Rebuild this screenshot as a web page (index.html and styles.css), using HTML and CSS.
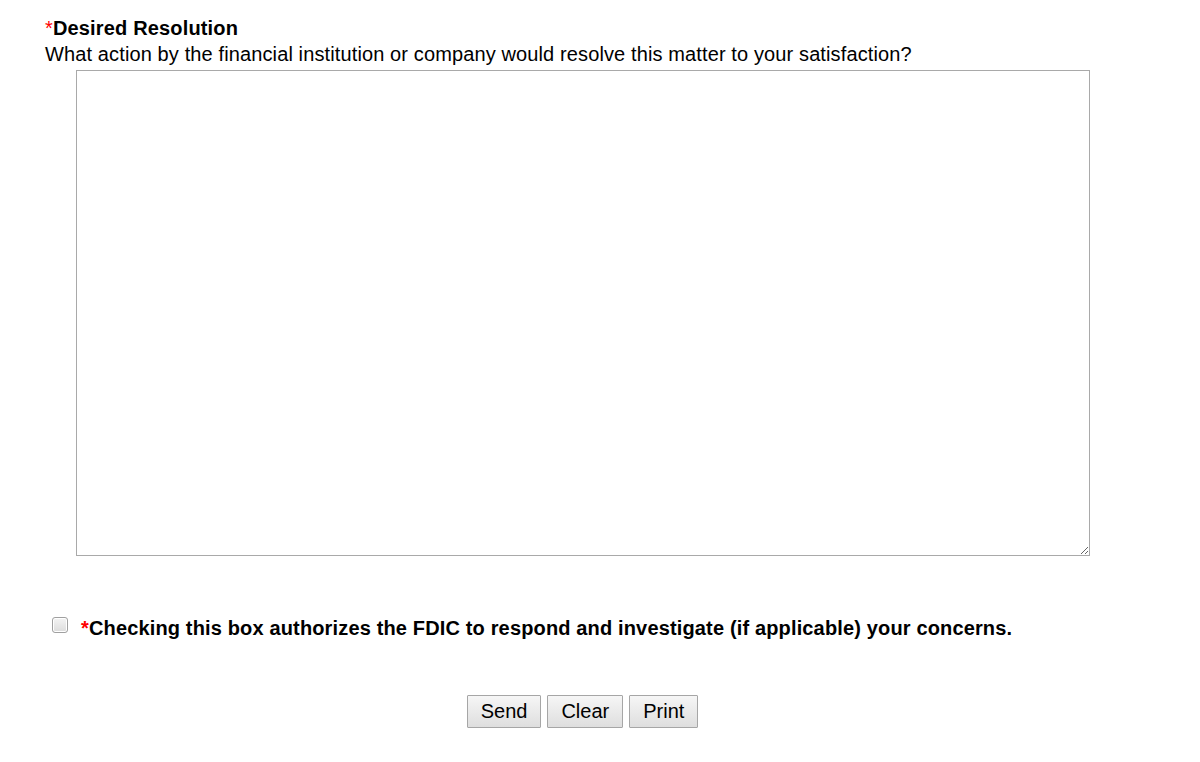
FILE: index.html
```html
<!DOCTYPE html>
<html>
<head>
<meta charset="utf-8">
<link rel="stylesheet" href="styles.css">
</head>
<body>
<div class="page">
  <div class="field">
    <div class="label"><span class="req">*</span>Desired Resolution</div>
    <div class="hint">What action by the financial institution or company would resolve this matter to your satisfaction?</div>
    <div class="area-wrap">
      <textarea class="area"></textarea>
    </div>
  </div>
  <div class="consent">
    <input type="checkbox" class="check">
    <span class="consent-text"><span class="req">*</span>Checking this box authorizes the FDIC to respond and investigate (if applicable) your concerns.</span>
  </div>
  <div class="actions">
    <button class="btn btn-send">Send</button>
    <button class="btn btn-clear">Clear</button>
    <button class="btn btn-print">Print</button>
  </div>
</div>
</body>
</html>
```
FILE: styles.css
```css
html, body {
  margin: 0;
  padding: 0;
  background: #ffffff;
}
body {
  font-family: "Liberation Sans", Arial, sans-serif;
  color: #000;
}
.page {
  padding: 15px 0 0 45px;
  width: 1120px;
}
.label {
  font-size: 20px;
  font-weight: bold;
  line-height: 27px;
  letter-spacing: 0.16px;
}
.req {
  color: #ff0000;
  font-weight: normal;
}
.consent-text .req {
  font-weight: bold;
}
.hint {
  font-size: 20px;
  line-height: 24px;
  letter-spacing: 0.12px;
}
.area-wrap {
  padding: 4px 0 0 31px;
}
.area {
  display: block;
  box-sizing: border-box;
  width: 1014px;
  height: 486px;
  border: 1px solid #a9a9a9;
  margin: 0;
  padding: 2px;
  resize: both;
  font-family: "Liberation Sans", Arial, sans-serif;
  font-size: 14px;
}
.consent {
  display: flex;
  align-items: center;
  margin-top: 60px;
  padding-left: 7px;
}
.check {
  width: 16px;
  height: 16px;
  margin: 0 13px 0 0;
  appearance: none;
  -webkit-appearance: none;
  border: 1px solid #a0a0a0;
  border-radius: 3px;
  background: linear-gradient(#f4f4f4, #dcdcdc);
  box-shadow: inset 0 0 0 1px #fff;
  position: relative;
  top: -3px;
}
.consent-text {
  font-size: 20px;
  font-weight: bold;
  line-height: 24px;
  letter-spacing: 0.15px;
}
.actions {
  display: flex;
  justify-content: center;
  gap: 6px;
  margin-top: 55px;
  width: 1165px;
  margin-left: -45px;
}
.btn {
  font-family: "Liberation Sans", Arial, sans-serif;
  font-size: 20px;
  height: 33px;
  padding: 0 13px;
  border: 1px solid #a6a6a6;
  border-radius: 1px;
  background: linear-gradient(#f6f6f6, #dedede);
  color: #000;
}
```
